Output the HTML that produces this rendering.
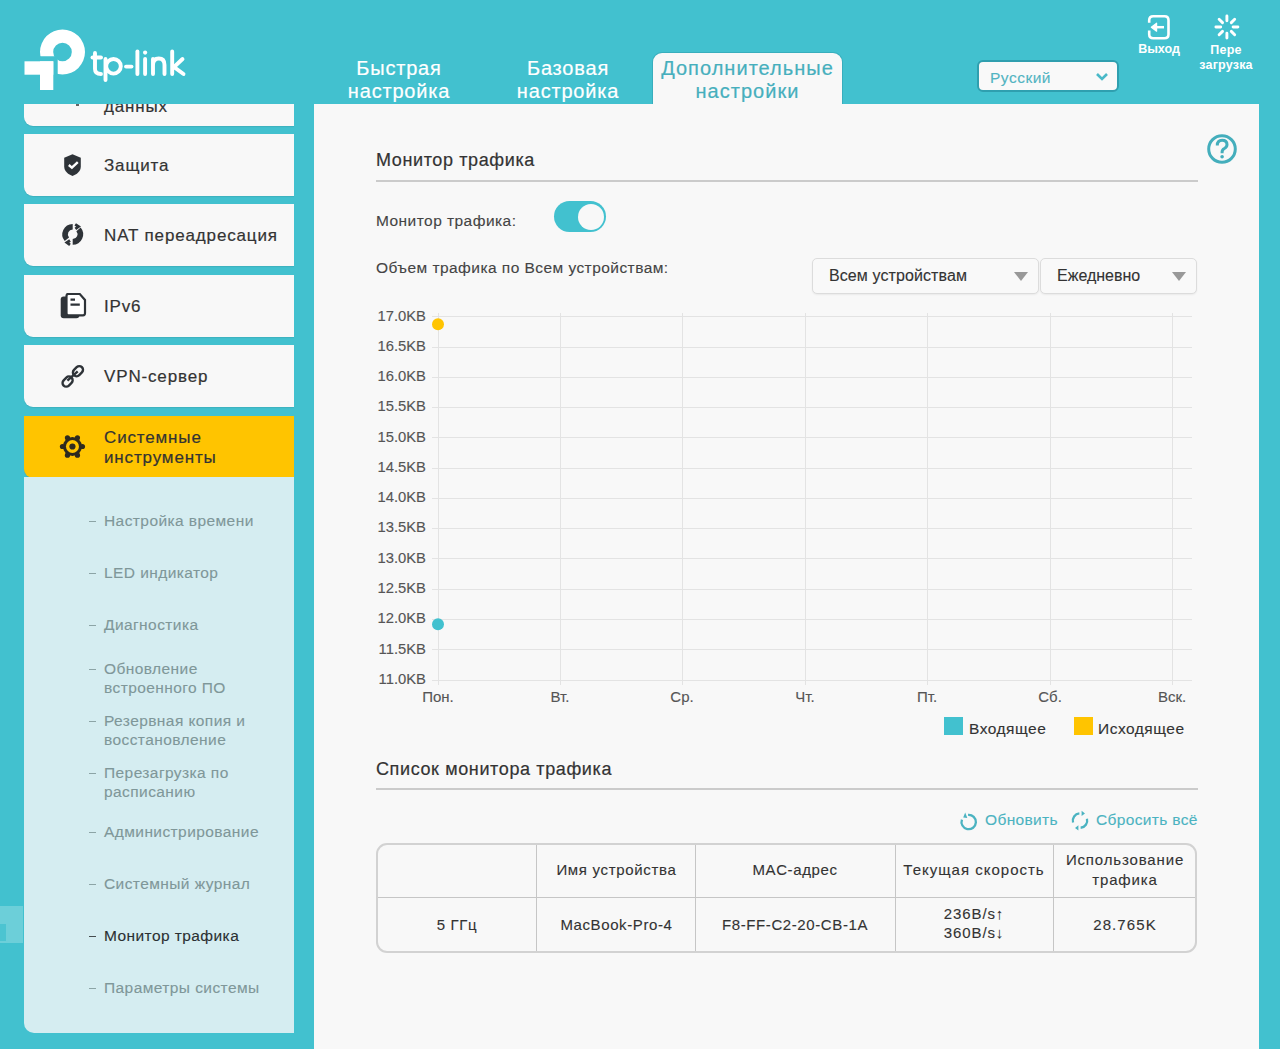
<!DOCTYPE html>
<html><head><meta charset="utf-8">
<style>
*{margin:0;padding:0;box-sizing:border-box}
html,body{width:1280px;height:1049px;overflow:hidden}
body{background:#42c1cf;font-family:"Liberation Sans",sans-serif;color:#333;position:relative}
.a{position:absolute;white-space:nowrap}
.tab,.mt,.h2{-webkit-text-stroke:0.2px currentColor}
.lbl,.si,.td,.leg,.lnk,.sel span,#lang span,.yl,.xl{-webkit-text-stroke:0.12px currentColor}
.tab{position:absolute;color:#fff;font-size:20px;line-height:23px;text-align:center;letter-spacing:0.8px}
#atab{position:absolute;left:653px;top:52.5px;width:189px;height:53px;background:#f8f8f8;border-radius:9px 9px 0 0;box-shadow:0 0 0 1px #38aebd}
#lang{position:absolute;left:977px;top:60px;width:142px;height:32px;border:2px solid #2f9faf;border-radius:6px;background:#f9f9f9}
.hic{color:#fff;font-weight:bold;font-size:12.5px;line-height:15px;text-align:center}
#side{position:absolute;left:24px;top:104px;width:270px;height:945px;overflow:hidden}
.mi{position:absolute;left:0;width:270px;height:62px;background:#f8f8f8;border-radius:0 0 0 9px;box-shadow:0 1px 1px rgba(0,0,0,.08)}
.mt{position:absolute;left:80px;font-size:17px;letter-spacing:0.85px;color:#333;line-height:20px}
.ico{position:absolute;left:34px;width:30px;height:30px}
#sub{position:absolute;left:0;top:373px;width:270px;height:556px;background:#d5edf1;border-radius:0 0 0 10px}
.si{position:absolute;left:80px;margin-top:-1.2px;font-size:15.5px;line-height:18.5px;letter-spacing:0.42px;color:#7f9799}
.si:before{content:"";position:absolute;left:-15px;top:9px;width:7px;height:1.2px;background:currentColor;opacity:.85}
#main{position:absolute;left:314px;top:104px;width:945px;height:945px;background:#f8f8f8}
.h2{position:absolute;left:376px;font-size:18px;letter-spacing:0.62px;color:#333;line-height:20px}
.hr{position:absolute;left:376px;width:822px;height:2px;background:#cbcbcb}
.lbl{position:absolute;font-size:15.5px;letter-spacing:0.45px;color:#444;line-height:18px;margin-top:-0.2px}
.sel{position:absolute;top:258px;height:36px;border:1px solid #dcdcdc;border-radius:5px;background:#f9f9f9;box-shadow:0 1px 2px rgba(0,0,0,.06)}
.sel span{position:absolute;left:16px;top:8px;font-size:16px;color:#333;line-height:18px}
.tri{position:absolute;top:13px;width:0;height:0;border-left:7px solid transparent;border-right:7px solid transparent;border-top:9px solid #999}
.yl{position:absolute;left:370px;width:56px;text-align:right;font-size:14.8px;color:#555;line-height:16px}
.xl{position:absolute;top:689.4px;width:60px;text-align:center;font-size:15px;color:#555;line-height:16px}
.leg{position:absolute;top:720px;font-size:15.5px;letter-spacing:0.5px;color:#333;line-height:18px}
.lnk{position:absolute;top:811px;font-size:15.5px;letter-spacing:0.35px;color:#4bb3c1;line-height:18px}
#tbl{position:absolute;left:376px;top:843px;width:821px;height:110px;border:2px solid #d2d2d2;border-radius:11px;overflow:hidden}
.vl{position:absolute;top:0;width:1px;height:110px;background:#c6c6c6}
.td{position:absolute;text-align:center;font-size:15px;letter-spacing:0.6px;color:#333;line-height:19px}
</style></head>
<body>
<!-- logo -->
<svg class="a" style="left:0;top:0" width="200" height="100" viewBox="0 0 200 100">
 <defs><clipPath id="rc"><rect x="0" y="0" width="200" height="56.3"/><rect x="57.7" y="0" width="200" height="100"/></clipPath></defs>
 <g fill="#fff">
  <path clip-path="url(#rc)" fill-rule="evenodd" d="M40 52a22.5 22.5 0 1 0 45 0a22.5 22.5 0 1 0 -45 0ZM53.2 52a9.3 9.3 0 1 0 18.6 0a9.3 9.3 0 1 0 -18.6 0Z"/>
  <rect x="24.5" y="61.3" width="28.8" height="13.4"/>
  <rect x="40" y="61.3" width="13.3" height="28.7"/>
 </g>
 <g fill="none" stroke="#fff" stroke-width="3.9" stroke-linecap="round">
  <path d="M95 53V69q0 5 6 5"/><path d="M92.5 57.5H101"/>
  <path d="M105.5 59V80"/><circle cx="113.5" cy="66.3" r="7.3"/>
  <path d="M126 66.6H131.5"/>
  <path d="M137.4 51.5V74"/>
  <path d="M145.1 59V74"/></g><circle cx="145.1" cy="52.6" r="2.1" fill="#fff"/><g fill="none" stroke="#fff" stroke-width="3.9" stroke-linecap="round">
  <path d="M153 74V59M153 65q0-6.5 5.8-6.5q5.7 0 5.7 6.5V74"/>
  <path d="M172.2 51.5V74M182.5 59L174 67L183.5 74"/>
 </g>
</svg>
<!-- tabs -->
<div class="tab" style="left:334px;top:57px;width:130px">Быстрая<br>настройка</div>
<div class="tab" style="left:503px;top:57px;width:130px">Базовая<br>настройка</div>
<div id="atab"><div class="tab" style="left:-10px;top:4.5px;width:209px;color:#46afbd;letter-spacing:1.03px">Дополнительные<br>настройки</div></div>
<!-- lang -->
<div id="lang"><span class="a" style="left:11px;top:6.5px;font-size:15.5px;color:#52b4c2;line-height:18px;letter-spacing:0.5px">Русский</span>
<svg class="a" style="left:116px;top:10px" width="14" height="10"><path d="M2 2l5 5l5-5" fill="none" stroke="#4ab9c8" stroke-width="2.6"/></svg></div>
<!-- logout/reboot -->
<svg class="a" style="left:1145px;top:12px" width="30" height="30">
 <path d="M4.2 10.75V8.2q0-4 4-4h11.3q4 0 4 4v14.1q0 4-4 4H8.2q-4 0-4-4V18.6" fill="none" stroke="#fff" stroke-width="2.6"/>
 <path d="M6.3 15.2L11.6 11.2V19.2Z" fill="#fff" stroke="#fff" stroke-width="1.2" stroke-linejoin="round"/><path d="M11.5 15.2h7.5" stroke="#fff" stroke-width="2.5"/>
</svg>
<div class="a hic" style="left:1129px;top:42px;width:60px">Выход</div>
<svg class="a" style="left:1212px;top:12px" width="30" height="30">
 <g stroke="#fff" stroke-width="2.9" stroke-linecap="round"><path d="M21.10 15.00L25.90 15.00M19.28 19.38L22.68 22.78M14.90 21.20L14.90 26.00M10.52 19.38L7.12 22.78M8.70 15.00L3.90 15.00M10.52 10.62L7.12 7.22M14.90 8.80L14.90 4.00M19.28 10.62L22.68 7.22"/></g>
</svg>
<div class="a hic" style="left:1196px;top:42.5px;width:60px;line-height:15.8px;letter-spacing:0.2px">Пере<br>загрузка</div>

<!-- sidebar -->
<div id="side">
 <div class="mi" style="top:-40.5px"><div style="position:absolute;left:52px;top:40px;width:3px;height:2px;background:#666"></div><div class="mt" style="top:33px">данных</div></div>
 <div class="mi" style="top:30px"><svg class="ico" style="top:16px" viewBox="0 0 30 30"><path d="M14.5 4.3L22.8 7.7V16.5C22.8 21.5 18.5 24.5 14.5 25.9C10.5 24.5 6.2 21.5 6.2 16.5V7.7Z" fill="#2e3338"/><path d="M10.8 15L13.9 17.6L19.8 12.2" fill="none" stroke="#fff" stroke-width="2.4"/></svg><div class="mt" style="top:22px">Защита</div></div>
 <div class="mi" style="top:100.4px"><svg class="ico" style="top:16px" viewBox="0 0 30 30"><g fill="none" stroke="#2e3338"><path stroke-width="5.6" d="M8.88 19.19A7.6 7.6 0 0 1 14.7 6.7M20.52 9.41A7.6 7.6 0 0 1 14.7 21.9"/><path stroke-width="2.8" d="M17.2 4.4L20.5 6.6L17.4 8.8M12 20.5L8.9 22.6L12 24.8"/></g></svg><div class="mt" style="top:22px">NAT переадресация</div></div>
 <div class="mi" style="top:170.8px"><svg class="ico" style="top:16px" viewBox="0 0 30 30"><rect x="2.7" y="5.5" width="18.7" height="21.7" rx="3" fill="#2e3338"/><path d="M8.5 3H21.8L27 8.9V22.3Q27 24.3 25 24.3H10.5Q8.5 24.3 8.5 22.3V5Q8.5 3 10.5 3Z" fill="#fff" stroke="#2e3338" stroke-width="2.2"/><path d="M12.5 8.7H17M12.5 13.7H21.8" stroke="#2e3338" stroke-width="2.2"/></svg><div class="mt" style="top:22px">IPv6</div></div>
 <div class="mi" style="top:241.2px"><svg class="ico" style="top:16px" viewBox="0 0 30 30"><g fill="none" stroke="#2e3338" stroke-width="2.4"><rect x="14.35" y="6.45" width="11.2" height="7.4" rx="3.7" transform="rotate(-45 19.95 10.15)"/><rect x="4" y="16.9" width="11.2" height="7.4" rx="3.7" transform="rotate(-45 9.6 20.6)"/><path d="M9.4 19.6L19.7 10.4"/></g></svg><div class="mt" style="top:22px">VPN-сервер</div></div>
 <div class="mi" style="top:311.6px;background:#ffc400"><svg class="ico" style="top:16px" viewBox="0 0 30 30"><g fill="#2e2a1f"><circle cx="14.45" cy="14.5" r="9.5"/><circle cx="24.45" cy="14.50" r="2.6"/><circle cx="19.45" cy="23.16" r="2.6"/><circle cx="9.45" cy="23.16" r="2.6"/><circle cx="4.45" cy="14.50" r="2.6"/><circle cx="9.45" cy="5.84" r="2.6"/><circle cx="19.45" cy="5.84" r="2.6"/></g><circle cx="14.45" cy="14.5" r="6.5" fill="#ffc400"/><circle cx="14.45" cy="14.5" r="3.1" fill="#2e2a1f"/></svg><div class="mt" style="top:12px;line-height:20px">Системные<br>инструменты</div></div>
 <div id="sub">
  <div class="si" style="top:36px">Настройка времени</div>
  <div class="si" style="top:88px">LED индикатор</div>
  <div class="si" style="top:140px">Диагностика</div>
  <div class="si" style="top:184.2px">Обновление<br>встроенного ПО</div>
  <div class="si" style="top:236.2px">Резервная копия и<br>восстановление</div>
  <div class="si" style="top:288.2px">Перезагрузка по<br>расписанию</div>
  <div class="si" style="top:347px">Администрирование</div>
  <div class="si" style="top:399px">Системный журнал</div>
  <div class="si" style="top:451px;color:#2b3033">Монитор трафика</div>
  <div class="si" style="top:503px">Параметры системы</div>
 </div>
</div>
<div class="a" style="left:0;top:905.5px;width:23px;height:37px;background:#6ccfd9"></div><div class="a" style="left:0;top:924px;width:6px;height:17px;background:#4cc4d1"></div>

<!-- main -->
<div id="main"></div>
<svg class="a" style="left:1205px;top:132px" width="34" height="34"><circle cx="17" cy="17" r="13.3" fill="none" stroke="#44aebc" stroke-width="3"/><path d="M12.3 13.4q0-5.2 4.8-5.2q4.9 0 4.9 4.4q0 2.6-2.6 3.9q-2.3 1.1-2.3 3.6v1.2" fill="none" stroke="#44aebc" stroke-width="3"/><circle cx="17.1" cy="24.8" r="1.8" fill="#44aebc"/></svg>

<div class="h2" style="top:150px">Монитор трафика</div>
<div class="hr" style="top:179.5px"></div>
<div class="lbl" style="left:376px;top:212px">Монитор трафика:</div>
<div class="a" style="left:554px;top:201px;width:52px;height:31px;border-radius:16px;background:#42c1cf"><div class="a" style="left:24px;top:2.5px;width:26px;height:26px;border-radius:13px;background:#f8f8f8"></div></div>
<div class="lbl" style="left:376px;top:259px">Объем трафика по Всем устройствам:</div>
<div class="sel" style="left:812px;width:227px"><span style="letter-spacing:0.1px">Всем устройствам</span><div class="tri" style="left:201px"></div></div>
<div class="sel" style="left:1040px;width:157px"><span>Ежедневно</span><div class="tri" style="left:131px"></div></div>

<!-- chart -->
<svg class="a" style="left:0;top:0" width="1280" height="760">
 <g stroke="#e3e3e3" stroke-width="1">
  <path d="M432 316.5H1192M432 347.5H1192M432 377.5H1192M432 407.5H1192M432 437.5H1192M432 468.5H1192M432 498.5H1192M432 528.5H1192M432 558.5H1192M432 589.5H1192M432 619.5H1192M432 649.5H1192M432 680.5H1192"/>
  <path d="M438.5 313V685M560.5 313V685M682.5 313V685M805.5 313V685M927.5 313V685M1050.5 313V685M1172.5 313V685"/>
 </g>
 <circle cx="438" cy="324.3" r="6" fill="#ffc400"/>
 <circle cx="438" cy="624.3" r="6" fill="#42c1cf"/>
 <rect x="944" y="717" width="19" height="18" fill="#42c1cf"/>
 <rect x="1074" y="717" width="19" height="18" fill="#ffc400"/>
</svg>
<div class="yl" style="top:307.5px">17.0KB</div>
<div class="yl" style="top:337.8px">16.5KB</div>
<div class="yl" style="top:368.0px">16.0KB</div>
<div class="yl" style="top:398.3px">15.5KB</div>
<div class="yl" style="top:428.6px">15.0KB</div>
<div class="yl" style="top:458.8px">14.5KB</div>
<div class="yl" style="top:489.1px">14.0KB</div>
<div class="yl" style="top:519.4px">13.5KB</div>
<div class="yl" style="top:549.7px">13.0KB</div>
<div class="yl" style="top:579.9px">12.5KB</div>
<div class="yl" style="top:610.2px">12.0KB</div>
<div class="yl" style="top:640.5px">11.5KB</div>
<div class="yl" style="top:670.7px">11.0KB</div>
<div class="xl" style="left:408px">Пон.</div>
<div class="xl" style="left:530px">Вт.</div>
<div class="xl" style="left:652px">Ср.</div>
<div class="xl" style="left:775px">Чт.</div>
<div class="xl" style="left:897px">Пт.</div>
<div class="xl" style="left:1020px">Сб.</div>
<div class="xl" style="left:1142px">Вск.</div>
<div class="leg" style="left:969px">Входящее</div>
<div class="leg" style="left:1098px">Исходящее</div>

<div class="h2" style="top:759px">Список монитора трафика</div>
<div class="hr" style="top:788px"></div>
<svg class="a" style="left:958px;top:810px" width="22" height="22"><path d="M10.07 4.83A7.2 7.2 0 1 1 3.93 9.54" fill="none" stroke="#4bb3c1" stroke-width="2.3"/><path d="M5.2 7.4L7.2 2.4L9.3 8z" fill="#4bb3c1"/></svg>
<div class="lnk" style="left:985px">Обновить</div>
<svg class="a" style="left:1069px;top:810px" width="22" height="22"><g fill="none" stroke="#4bb3c1" stroke-width="2.3"><path d="M10.37 3.43A7.2 7.2 0 0 0 4.05 12.46"/><path d="M17.95 8.74A7.2 7.2 0 0 1 11.63 17.77"/></g><path d="M12.6 0.7L16 3.4L12.6 6.1z M9.4 15.2L6 17.9L9.4 20.6z" fill="#4bb3c1"/></svg>
<div class="lnk" style="left:1096px">Сбросить всё</div>

<div id="tbl">
 <div class="a" style="left:0;top:52px;width:821px;height:1px;background:#c6c6c6"></div>
 <div class="vl" style="left:158px"></div>
 <div class="vl" style="left:317px"></div>
 <div class="vl" style="left:517px"></div>
 <div class="vl" style="left:675px"></div>
</div>
<div class="td" style="left:537px;top:860px;width:159px;letter-spacing:0.68px">Имя устройства</div>
<div class="td" style="left:695px;top:860px;width:200px">MAC-адрес</div>
<div class="td" style="left:895px;top:860px;width:158px;letter-spacing:1.0px">Текущая скорость</div>
<div class="td" style="left:1053px;top:850.3px;width:144px;line-height:19.5px;letter-spacing:0.85px">Использование<br>трафика</div>
<div class="td" style="left:377px;top:915px;width:160px">5 ГГц</div>
<div class="td" style="left:537px;top:915px;width:159px">MacBook-Pro-4</div>
<div class="td" style="left:695px;top:915px;width:200px">F8-FF-C2-20-CB-1A</div>
<div class="td" style="left:895px;top:905px;width:158px;line-height:18.5px;letter-spacing:0.9px">236B/s↑<br>360B/s↓</div>
<div class="td" style="left:1053px;top:915px;width:144px;letter-spacing:1.1px">28.765K</div>
</body></html>
